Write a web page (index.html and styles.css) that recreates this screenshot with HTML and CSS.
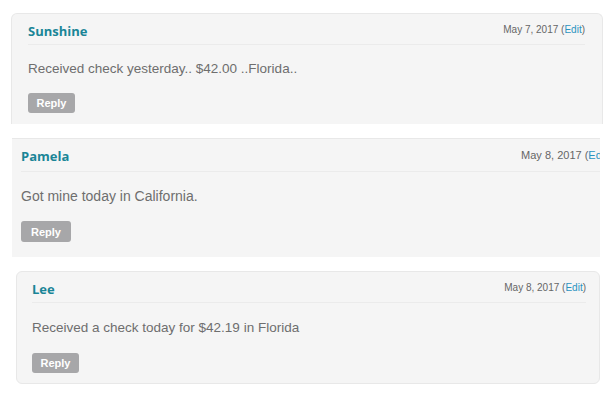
FILE: index.html
```html
<!DOCTYPE html>
<html lang="en">
<head>
    <meta charset="UTF-8">
    <meta name="viewport" content="width=device-width, initial-scale=1.0">
    <title>Comments</title>
    <link rel="stylesheet" href="styles.css">
</head>
<body>
    <div class="comments">
        <article class="comment comment-first">
            <header class="comment-head">
                <span class="author">Sunshine</span>
                <span class="date">May 7, 2017 (<a href="#">Edit</a>)</span>
            </header>
            <p class="comment-text">Received check yesterday.. $42.00 ..Florida..</p>
            <button class="reply">Reply</button>
        </article>

        <article class="comment comment-second">
            <header class="comment-head">
                <span class="author">Pamela</span>
                <span class="date">May 8, 2017 (<a href="#">Edit</a>)</span>
            </header>
            <p class="comment-text">Got mine today in California.</p>
            <button class="reply">Reply</button>
        </article>

        <article class="comment comment-third">
            <header class="comment-head">
                <span class="author">Lee</span>
                <span class="date">May 8, 2017 (<a href="#">Edit</a>)</span>
            </header>
            <p class="comment-text">Received a check today for $42.19 in Florida</p>
            <button class="reply">Reply</button>
        </article>
    </div>
</body>
</html>
```

FILE: styles.css
```css
/* comment cards */
*, *::before, *::after {
    box-sizing: border-box;
}

body {
    margin: 0;
    padding: 0;
    background: #ffffff;
    font-family: 'Liberation Sans', Arial, sans-serif;
    width: 614px;
    height: 400px;
    overflow: hidden;
}

.comments {
    display: flex;
    flex-direction: column;
    padding-top: 13px;
    gap: 14px;
}

.comment {
    background-color: #f5f5f5;
    border: 1px solid #e8e8e8;
    border-radius: 6px;
    overflow: hidden;
    display: flex;
    flex-direction: column;
    align-items: flex-start;
}

.comment-head {
    align-self: stretch;
    display: flex;
    justify-content: space-between;
    align-items: center;
    line-height: 22px;
    padding-bottom: 2px;
    border-bottom: 1px solid #ebebeb;
}

.author {
    font-family: 'Open Sans', sans-serif;
    font-weight: 700;
    font-size: 13px;
    color: #1a8597;
}

.date {
    font-size: 10px;
    color: #666666;
    margin-top: -3px;
}

.date a {
    color: #2a93c0;
    text-decoration: none;
}

.comment-text {
    margin: 14px 0 0;
    font-size: 13.5px;
    line-height: 20px;
    color: #6e6e6e;
}

.reply {
    margin-top: 14px;
    width: 47px;
    height: 20px;
    padding: 0;
    border: none;
    border-radius: 3px;
    background-color: #a7a7a9;
    color: #ffffff;
    font-family: 'Liberation Sans', Arial, sans-serif;
    font-weight: 700;
    font-size: 11px;
}

/* each snippet was cropped a bit differently */
.comment-first {
    margin-left: 11px;
    width: 592px;
    height: 111px;
    padding: 6px 17px 0 16px;
    border-bottom: none;
    border-radius: 6px 6px 0 0;
}

.comment-second {
    margin-left: 12px;
    width: 588px;
    height: 119px;
    padding: 5px 0 0 9px;
    border-radius: 0;
    border-right: none;
    border-bottom: none;
    border-left: none;
}

.comment-second .comment-head {
    margin-right: -11px;
    line-height: 24px;
    padding-bottom: 3px;
}

.comment-second .date {
    font-size: 11px;
    margin-top: -2px;
}

.comment-second .comment-text {
    margin-top: 13px;
    font-size: 14px;
    line-height: 22px;
}

.comment-second .reply {
    width: 50px;
    height: 21px;
    margin-top: 14px;
}

.comment-third {
    margin-left: 16px;
    width: 584px;
    height: 113px;
    padding: 6px 13px 0 15px;
    border-radius: 6px;
}

.comment-third .comment-text {
    margin-top: 15px;
}

.comment-third .reply {
    margin-top: 15px;
}
```
